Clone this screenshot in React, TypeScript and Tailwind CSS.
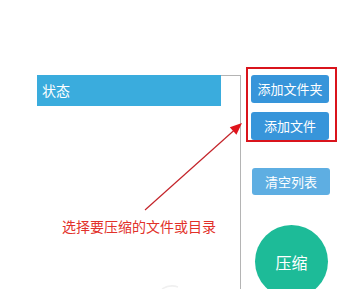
import React from 'react';

const font = { fontFamily: '"Noto Sans CJK SC", "Noto Sans", sans-serif' };

export default function App() {
  return (
    <div className="relative w-[343px] h-[289px] overflow-hidden bg-white flex" style={font}>
      {/* file list */}
      <div className="w-[241px] h-full pt-[75px] pl-[37px]">
        <div className="h-full border-t border-r border-[#b4b4b4]">
          <div className="-mt-px w-[184px] h-[31px] bg-[#3aacdd] text-white text-[14px] leading-[31px] pl-[5px]">
            状态
          </div>
          <div className="mt-[110px] pl-[25px] text-[14px] leading-[20px] text-[#e2312a] whitespace-nowrap">
            选择要压缩的文件或目录
          </div>
        </div>
      </div>

      {/* actions */}
      <div className="flex flex-col items-start pl-[5px]">
        <div className="mt-[67px] w-[91px] h-[80px] border-2 border-[#d9141c] pl-[3px] pt-[6px] flex flex-col gap-[9px]">
          <button className="w-[78px] h-[28px] rounded-[3px] bg-[#3795da] text-white text-[13px] leading-[28px] text-center">
            添加文件夹
          </button>
          <button className="w-[78px] h-[28px] rounded-[3px] bg-[#3795da] text-white text-[13px] leading-[28px] text-center">
            添加文件
          </button>
        </div>
        <button className="mt-[26px] ml-[6px] w-[78px] h-[27px] rounded-[3px] bg-[#5eaee2] text-white text-[13px] leading-[27px] text-center">
          清空列表
        </button>
        <button className="mt-[30px] ml-[9px] w-[73px] h-[73px] shrink-0 rounded-full bg-[#1dbb98] text-white text-[16px] flex items-center justify-center">
          压缩
        </button>
      </div>

      {/* annotation arrow */}
      <svg className="absolute left-0 top-0 pointer-events-none" width="343" height="289" viewBox="0 0 343 289">
        <line x1="145" y1="210" x2="235" y2="129.5" stroke="#c4242a" strokeWidth="1.2" />
        <polygon points="242,123 236.4,134.7 229.8,127.3" fill="#e0141c" />
        <path d="M162 289 Q170 284 178 287" stroke="#f0f0f0" strokeWidth="1.5" fill="none" />
      </svg>
    </div>
  );
}
